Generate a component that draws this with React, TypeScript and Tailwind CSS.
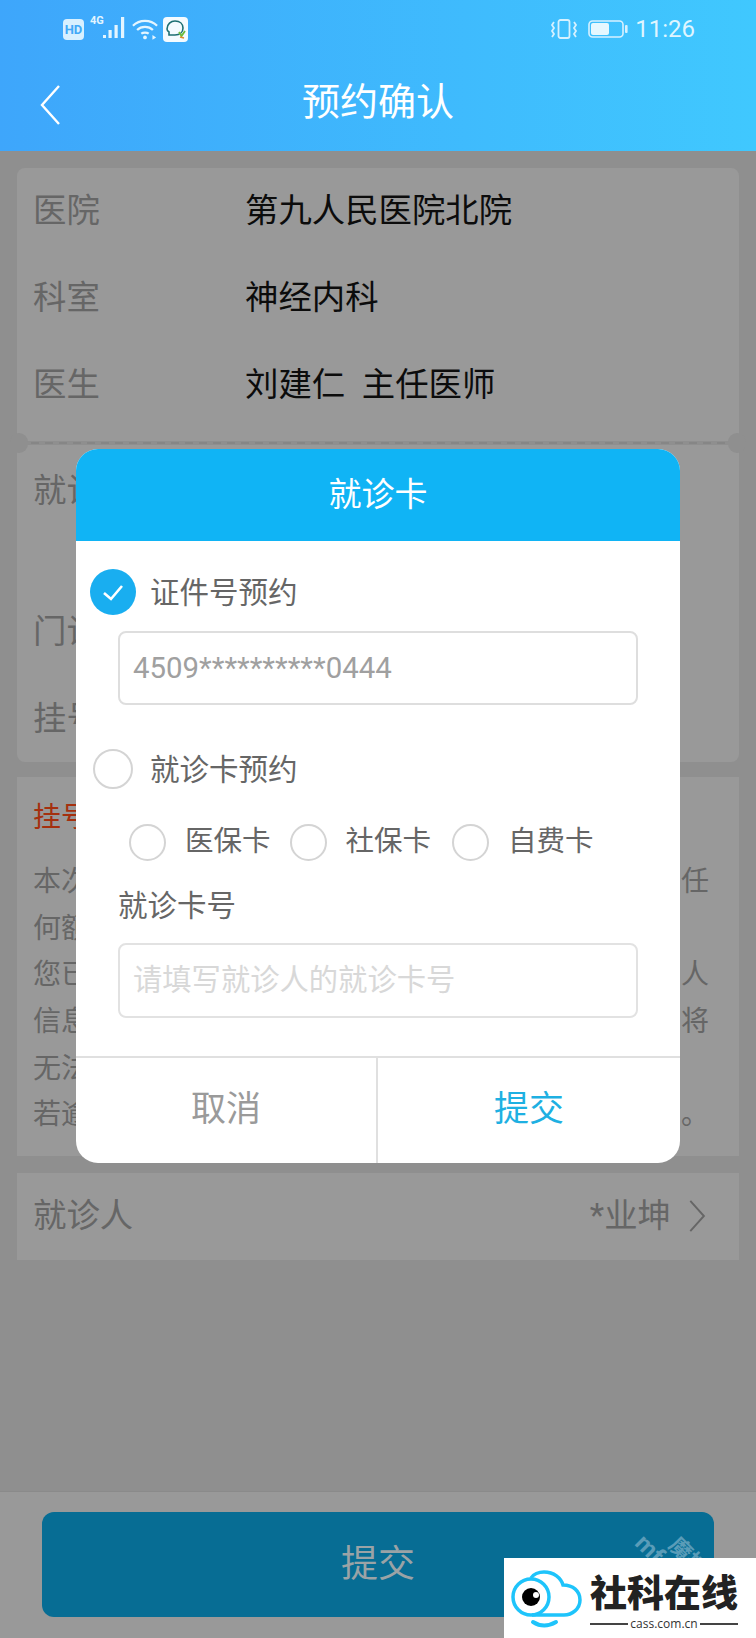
import React from "react";

const Chevron = ({ dir, className }: { dir: "left" | "right"; className: string }) => (
  <svg viewBox="0 0 20 40" fill="none" className={className}>
    <path
      d={dir === "left" ? "M19 1 L2 20 L19 39" : "M1 1 L18 20 L1 39"}
      stroke="currentColor"
      strokeWidth="2.4"
    />
  </svg>
);

const StatusLeft = () => (
  <div className="flex items-center">
    <div className="w-[21px] h-[21px] rounded-[4px] bg-[#d8f0ff] flex items-center justify-center text-[13px] font-bold leading-none text-[#42a9f8]">
      HD
    </div>
    <div className="ml-[6px] w-[35px] h-[24px] relative">
      <span className="absolute left-0 top-[-3px] text-[11px] font-bold leading-[14px] text-[#e4f5ff]">4G</span>
      <svg viewBox="0 0 35 24" className="w-[35px] h-[24px]" fill="#e4f5ff">
        <rect x="13" y="18" width="3" height="3" />
        <rect x="18.5" y="13" width="3.2" height="8" />
        <rect x="24.5" y="8" width="3.2" height="13" />
        <rect x="31" y="0" width="3.2" height="21" />
      </svg>
    </div>
    <svg viewBox="0 0 28 22" fill="none" stroke="#e4f5ff" strokeWidth="2.4" className="ml-[7px] w-[26px] h-[21px]">
      <path d="M1 7 C8 0 20 0 27 7" />
      <path d="M5.5 11.5 C10 7 18 7 22.5 11.5" />
      <path d="M10 15.5 C12 14 16 14 18 15.5" />
      <circle cx="14" cy="19.5" r="2" fill="#e4f5ff" stroke="none" />
      <path d="M22 17 L26 19.5 L22 22 Z" fill="#e4f5ff" stroke="none" />
    </svg>
    <div className="ml-[5px] w-[25px] h-[25px] rounded-[4px] bg-[#f4fbff] flex items-center justify-center">
      <svg viewBox="0 0 25 25" fill="none" className="w-[25px] h-[25px]">
        <path d="M4 12 C4 7 8 4 12 4 C17 4 20 7 20 11 C20 15 17 18 12 18 L6 18 L6 15 C4.5 14 4 13 4 12 Z" stroke="#1d6f72" strokeWidth="1.6" />
        <path d="M16 15 L18.5 19 L22 14" stroke="#6cbb3c" strokeWidth="1.8" />
        <path d="M17 20 L21 21" stroke="#e08a2c" strokeWidth="1.6" />
      </svg>
    </div>
  </div>
);

const StatusRight = () => (
  <div className="flex items-center">
    <svg viewBox="0 0 28 20" fill="none" stroke="#d6f1ff" strokeWidth="1.8" className="w-[28px] h-[20px]">
      <rect x="8.5" y="1" width="11" height="18" rx="2" />
      <path d="M4 3 L2 6 L4 9 L2 12 L4 15 L2 18" />
      <path d="M24 3 L26 6 L24 9 L26 12 L24 15 L26 18" />
    </svg>
    <svg viewBox="0 0 40 18" fill="none" className="ml-[10px] w-[40px] h-[18px]">
      <rect x="1" y="1" width="34" height="16" rx="3.5" stroke="#d6f1ff" strokeWidth="1.6" />
      <rect x="3" y="3" width="18" height="12" rx="2" fill="#e6f8ff" />
      <rect x="37" y="5" width="2.6" height="8" rx="1" fill="#d6f1ff" />
    </svg>
    <span className="ml-[7px] text-[24px] leading-none text-[#dff5ff]">11:26</span>
  </div>
);

const InfoRow = ({ label, value }: { label: string; value: string }) => (
  <div className="h-[87px] flex items-center">
    <span className="w-[212px] text-[#666]">{label}</span>
    <span className="text-[#0c0c0c] whitespace-pre">{value}</span>
  </div>
);

const noticeLines = [
  ["本次", "任"],
  ["何额", ""],
  ["您已", "人"],
  ["信息", "将"],
  ["无法", ""],
  ["若逾", "。"],
];

const Radio = ({ className }: { className: string }) => (
  <div className={`rounded-full border-2 border-[#d4d4d4] bg-white shrink-0 ${className}`} />
);

const Modal = () => (
  <div className="absolute left-[76px] top-[449px] w-[604px] h-[714px] rounded-[22px] overflow-hidden bg-white flex flex-col">
    <div className="h-[92px] bg-[#10b4f5] flex items-center justify-center text-white text-[33px]">
      就诊卡
    </div>
    <div className="flex-1 text-[#666] text-[29.5px]">
      <div className="mt-[28px] ml-[14px] h-[46px] flex items-center gap-[14px]">
        <div className="w-[46px] h-[46px] rounded-full bg-[#19aef0] flex items-center justify-center">
          <svg viewBox="0 0 24 24" fill="none" stroke="white" strokeWidth="2.6" className="w-[24px] h-[24px]">
            <path d="M3 13 L10 19 L21 6" />
          </svg>
        </div>
        <span className="leading-none pt-[4px]">证件号预约</span>
      </div>
      <div className="mt-[16px] ml-[42px] w-[520px] h-[74px] rounded-[8px] border-2 border-[#dedede] flex items-center pl-[13px] text-[29.4px] text-[#a0a0a0]">
        4509**********0444
      </div>
      <div className="mt-[44px] ml-[17px] h-[40px] flex items-center gap-[17px]">
        <Radio className="w-[40px] h-[40px]" />
        <span className="leading-none pt-[4px]">就诊卡预约</span>
      </div>
      <div className="mt-[35px] ml-[53px] h-[37px] flex items-center text-[28.5px]">
        <Radio className="w-[37px] h-[37px]" />
        <span className="ml-[19px] mr-[19px]">医保卡</span>
        <Radio className="w-[37px] h-[37px]" />
        <span className="ml-[19px] mr-[21px]">社保卡</span>
        <Radio className="w-[37px] h-[37px]" />
        <span className="ml-[19px]">自费卡</span>
      </div>
      <div className="mt-[24px] ml-[42px] leading-[42px]">就诊卡号</div>
      <div className="mt-[16px] ml-[42px] w-[520px] h-[75px] rounded-[8px] border-2 border-[#e2e2e2] flex items-center pl-[13px] text-[29.3px] text-[#d8d8d8]">
        请填写就诊人的就诊卡号
      </div>
    </div>
    <div className="h-[107px] border-t-2 border-[#e0e0e0] flex text-[35px]">
      <div className="w-[302px] border-r-2 border-[#e0e0e0] flex items-center justify-center text-[#9a9a9a]">
        取消
      </div>
      <div className="flex-1 flex items-center justify-center text-[#1eb0e2]">提交</div>
    </div>
  </div>
);

const Logo = () => (
  <div className="absolute right-0 bottom-0 w-[252px] h-[80px] bg-white flex">
    <svg viewBox="0 0 84 80" fill="none" className="w-[84px] h-[80px] shrink-0">
      <circle cx="27" cy="39" r="18" stroke="#1ec4fb" strokeWidth="3.5" />
      <path
        d="M27 20 C29 16 35 14 40 14 C50 14 57 20 59 27 C69 27 76 33 76 42 C76 51 68 57 60 57 L28 57"
        stroke="#1ec4fb"
        strokeWidth="3.5"
      />
      <circle cx="27" cy="39" r="9" fill="#000" />
      <circle cx="32" cy="37" r="3" fill="#fff" />
      <path d="M29 64 Q40 71 52 64" stroke="#1ec4fb" strokeWidth="4" strokeLinecap="round" />
    </svg>
    <div className="w-[148px] ml-[2px] flex flex-col">
      <div className="mt-[17px] text-[37px] leading-[40px] font-black text-[#222] whitespace-nowrap">
        社科在线
      </div>
      <div className="mt-[2px] flex items-center text-[#333]">
        <div className="flex-1 h-[2px] bg-[#444]" />
        <span className="mx-[2px] text-[12px] leading-[14px] font-['Open_Sans',sans-serif]">cass.com.cn</span>
        <div className="flex-1 h-[2px] bg-[#444]" />
      </div>
    </div>
  </div>
);

export default function App() {
  return (
    <div className="relative w-[756px] h-[1638px] overflow-hidden flex flex-col bg-[#8f8f8f] font-['Roboto','Noto_Sans_CJK_SC',sans-serif]">
      {/* 顶部 */}
      <div className="h-[151px] shrink-0 bg-gradient-to-r from-[#3ea6fb] to-[#40c8fe]">
        <div className="h-[58px] pl-[63px] pr-[61px] flex items-center justify-between">
          <StatusLeft />
          <StatusRight />
        </div>
        <div className="relative h-[88px] flex items-center justify-center text-white text-[38px]">
          <Chevron dir="left" className="absolute left-[40px] top-[27px] w-[20px] h-[40px] text-white" />
          预约确认
        </div>
      </div>

      {/* 内容 */}
      <div className="flex-1 px-[17px] pt-[17px] text-[33.4px]">
        <div className="relative">
          <div className="h-[273px] bg-[#999] rounded-[8px] pl-[16px] pr-[18px]">
            <InfoRow label="医院" value="第九人民医院北院" />
            <InfoRow label="科室" value="神经内科" />
            <InfoRow label="医生" value="刘建仁  主任医师" />
          </div>
          <div className="h-[4px] flex items-center px-[14px]">
            <div className="w-full h-[2px] bg-[repeating-linear-gradient(90deg,#868686_0,#868686_8px,transparent_8px,transparent_14px)]" />
          </div>
          <div className="absolute left-[-7px] top-[265px] w-[18px] h-[20px] rounded-full bg-[#8f8f8f]" />
          <div className="absolute right-[-7px] top-[265px] w-[18px] h-[20px] rounded-full bg-[#8f8f8f]" />
          <div className="h-[317px] bg-[#999] rounded-[8px] pl-[16px] pr-[18px] text-[#666]">
            <div className="h-[92px] flex items-center">就诊</div>
            <div className="mt-[52px] h-[87px] flex items-center">门诊</div>
            <div className="h-[87px] flex items-center">挂号</div>
          </div>
        </div>

        <div className="mt-[15px] h-[379px] bg-[#999] pl-[16px] pr-[30px] text-[#666] text-[28px]">
          <div className="h-[82px] flex items-center text-[#a5300e]">挂号</div>
          {noticeLines.map(([start, end]) => (
            <div key={start} className="h-[46.6px] flex items-center justify-between">
              <span>{start}</span>
              <span>{end}</span>
            </div>
          ))}
        </div>

        <div className="mt-[17px] h-[87px] bg-[#999] pl-[16px] pr-[33px] flex items-center justify-between text-[#666]">
          <span>就诊人</span>
          <div className="flex items-center gap-[18px]">
            <span>*业坤</span>
            <Chevron dir="right" className="w-[17px] h-[32px] text-[#666]" />
          </div>
        </div>
      </div>

      {/* 底部按钮 */}
      <div className="h-[147px] shrink-0 bg-[#999] border-t border-[#8a8a8a] px-[42px] pt-[20px]">
        <div className="relative h-[105px] rounded-[12px] overflow-hidden bg-[#076d94] flex items-center justify-center text-[37px] text-[#9aa3a6]">
          提交
          <span className="absolute left-[593px] top-[25px] rotate-45 text-[#5a9cb8] text-[24px] leading-none font-bold">mf</span>
          <span className="absolute left-[624px] top-[34px] rotate-45 text-[#5a9cb8] text-[22px] leading-none font-bold">魔控</span>
        </div>
      </div>

      <Modal />
      <Logo />
    </div>
  );
}
